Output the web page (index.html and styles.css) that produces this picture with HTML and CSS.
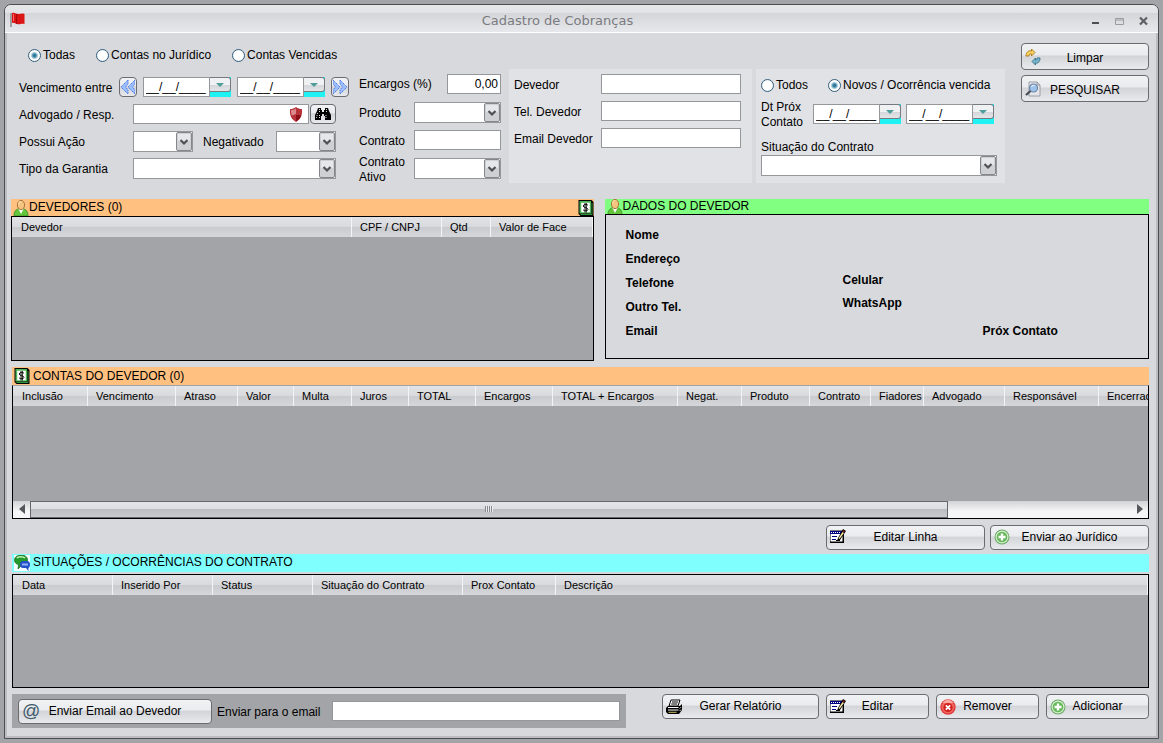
FILE: index.html
```
<!DOCTYPE html>
<html lang="pt-BR">
<head>
<meta charset="utf-8">
<title>Cadastro de Cobranças</title>
<link rel="stylesheet" href="styles.css">
</head>
<body>
<svg class="sprite" aria-hidden="true">
  <symbol id="i-edit" viewBox="0 0 16 16">
    <path d="M0 2h14v12H0z" fill="#000"/><path d="M0 2h13v11H0z" fill="#fff" stroke="#000" stroke-width="1"/>
    <path d="M0 2h12v3H0z" fill="#000080"/><path d="M1 3.500h10" stroke="#fff" stroke-width="1" stroke-dasharray="1 1"/>
    <path d="M2 7.500h5M2 10.500h4" stroke="#000080" stroke-width="1"/><path d="M6 11.500h4" stroke="#000"/>
    <path d="M13 0l3 2-6 9-3 1 1-3z" fill="#000"/><path d="M12.500 3l1.500 1-4.500 6-1-.7z" fill="#f6e7a0"/><path d="M13.200 1.200l1.600 1-.7 1-1.600-1z" fill="#b02020"/>
  </symbol>
  <symbol id="i-plus" viewBox="0 0 16 16">
    <circle cx="8" cy="8" r="7.500" fill="#6aa866"/><circle cx="8" cy="8" r="6.500" fill="#d8f0d0"/><circle cx="8" cy="8" r="5.300" fill="#67b85c"/>
    <path d="M8 4.500v7M4.500 8h7" stroke="#fff" stroke-width="2.400"/>
  </symbol>
  <symbol id="i-remove" viewBox="0 0 16 16">
    <circle cx="8" cy="8" r="7.700" fill="#e23a3a"/><circle cx="8" cy="8" r="6.300" fill="#f06a60"/><path d="M2.500 4a6.400 6.400 0 0 1 11 0z" fill="#f7aaa2"/>
    <circle cx="8" cy="8.500" r="4.600" fill="#d21f1f"/><path d="M5.800 6.300l4.400 4.400m0-4.400l-4.400 4.400" stroke="#fff" stroke-width="1.800"/>
  </symbol>
  <symbol id="i-print" viewBox="0 0 16 16">
    <path d="M5 1h9l-2 6H3z" fill="#fff" stroke="#000"/><path d="M6 3h6M5.300 5h6" stroke="#000"/>
    <path d="M2 7h12l2-2v6l-3 4H2l-2-2V9z" fill="#000"/><path d="M2 8.500h10.500M2 11h10.500" stroke="#fff"/><path d="M2.500 13.300h8" stroke="#c8c060"/><path d="M13.700 9.500l1.300-1.300M13.700 12l1.300-1.300" stroke="#ddd"/>
  </symbol>
  <symbol id="i-person" viewBox="0 0 16 16">
    <path d="M1 16c0-5 2-6.500 5-7.500h4c3 1 5 2.500 5 7.500z" fill="#63c53c" stroke="#3c8f2a" stroke-width=".8"/>
    <path d="M5.500 9h5L8 14z" fill="#fff"/><ellipse cx="8" cy="5" rx="3.600" ry="4.600" fill="#f5c47e" stroke="#a8743c" stroke-width="1"/>
    <path d="M5.600 4.500c0-2 1-3 2.400-3.200" stroke="#ffe9c0" fill="none"/>
  </symbol>
  <symbol id="i-money" viewBox="0 0 15 16">
    <path d="M0 0h13l2 2v14H2l-2-2z" fill="#000"/><path d="M1 1h11.500v12.500H1z" fill="#4cb455"/><path d="M2 14.500h11.500V3" stroke="#2f8f3a" fill="none"/>
    <path d="M2.700 2.700h8.600v9.600H2.700z" fill="#fff"/><path d="M9.500 5.300C9 4 4.700 4 4.700 6s4.800 1.400 4.800 3.300-3.800 1.900-4.900.6M6.500 3v9.500M7.800 3v9.500" stroke="#000" stroke-width=".9" fill="none"/>
  </symbol>
  <symbol id="i-chat" viewBox="0 0 16 16">
    <path d="M0 0h16v16H0z" fill="#f4fdff"/><path d="M7 0c4 0 6.500 2 6.500 5S11 10 8 10L4 14l.5-4.500C2 9 .5 7.500.5 5S3 0 7 0z" fill="#249a2c" stroke="#14651a" stroke-width=".7"/>
    <path d="M3 3c1-1.500 6-2 8 0" stroke="#c5f2b8" stroke-width="1.500" fill="none"/>
    <path d="M9 6h4c2 0 3 1.500 3 3.500S15 13 14.500 13v3L12 13H9c-2 0-3-1.500-3-3.500S7 6 9 6z" fill="#2450c8"/><path d="M8 9.500h6M9 8v3M11 8v3M13 8v3" stroke="#9dbcff" stroke-width=".9"/>
  </symbol>
  <symbol id="i-left" viewBox="0 0 14 16">
    <path d="M7 1v4L4.500 8 7 11v4L0 8zM14 1v4l-2.500 3 2.500 3v4L7 8z" fill="#9cc0ff" stroke="#3f6fe0" stroke-width=".9" stroke-dasharray="1.500 .8"/>
  </symbol>
  <symbol id="i-down" viewBox="0 0 8 4"><path d="M0 0h8L4 4z" fill="#4f9d9a"/></symbol>
</svg>

<div class="window">
  <header class="titlebar">
    <svg class="flag" viewBox="0 0 15 15"><path d="M1 1v14" stroke="#8a8a8a" stroke-width="1.500"/><path d="M2 1c3-1 4 1.500 7 1 2-.3 3-1 5.500 0v10c-3-1-4 .5-6.500.3C5.500 12 4.500 10 2 11z" fill="#dc1414"/><path d="M7 2c-.8 3-.8 6 0 10" stroke="#9c0808" fill="none"/><path d="M3.500 2v7" stroke="#f66" fill="none"/></svg>
    <h1>Cadastro de Cobranças</h1>
    <div class="controls">
      <button type="button" aria-label="Minimizar"><svg viewBox="0 0 10 10"><path d="M1 7h7" stroke="#4d4f55" stroke-width="2"/></svg></button>
      <button type="button" aria-label="Maximizar"><svg viewBox="0 0 10 10"><path d="M.5 2.500h8v6h-8zM1 4h8" stroke="#9a9ca2" fill="none"/></svg></button>
      <button type="button" aria-label="Fechar"><svg viewBox="0 0 10 10"><path d="M1 1.500l7 7m0-7l-7 7" stroke="#5d5f66" stroke-width="2.200"/></svg></button>
    </div>
  </header>

  <main>
    <form class="search">
      <div class="filters">
        <div class="radios">
          <label><input type="radio" name="tipo" checked>Todas</label>
          <label><input type="radio" name="tipo">Contas no Jurídico</label>
          <label><input type="radio" name="tipo">Contas Vencidas</label>
        </div>
        <div class="groups">
          <div class="group general">
            <div class="row spread">
              <label for="venc1">Vencimento entre</label>
              <button type="button" class="btn step" aria-label="Anterior"><svg><use href="#i-left"/></svg></button>
              <span class="date"><input id="venc1" type="text" value="__/__/____"><span class="drop"><button type="button" aria-label="Abrir calendário"><svg><use href="#i-down"/></svg></button></span></span>
              <span class="date"><input type="text" value="__/__/____" aria-label="Vencimento final"><span class="drop"><button type="button" aria-label="Abrir calendário"><svg><use href="#i-down"/></svg></button></span></span>
              <button type="button" class="btn step next" aria-label="Próximo"><svg><use href="#i-left"/></svg></button>
            </div>
            <div class="row">
              <label class="lead" for="adv">Advogado / Resp.</label>
              <span class="lookup"><input id="adv" type="text"><svg viewBox="0 0 14 15"><path d="M7 0c2 1.500 3.500 2 6 2 .5 6-1 10-6 13C2 12 .5 8 1 2c2.500 0 4-.5 6-2z" fill="#b8323a"/><path d="M7 1.500C5 2.700 4.500 3 2 3c0 3 .3 4 1 5.500L7 7z" fill="#d98a8c"/><path d="M7 8h5C11.500 11 10 13 7 14.500z" fill="#8c1018"/></svg></span>
              <button type="button" class="btn find" aria-label="Procurar"><svg viewBox="0 0 18 14"><path d="M4 1h3v2h1v2h2V3h1V1h3l1 3 2 4v5h-6V9h-1V7H8v2H7v4H1V8l2-4z" fill="#000"/><path d="M5.500 2v3M12.500 2v3M3.500 6l-1 5M12 8v4M5.500 8v4" stroke="#ddd" stroke-dasharray="1 1"/></svg></button>
            </div>
            <div class="row">
              <label class="lead" for="acao">Possui Ação</label>
              <select id="acao" class="w60"><option></option></select>
              <label class="mid" for="neg">Negativado</label>
              <select id="neg" class="w60"><option></option></select>
            </div>
            <div class="row">
              <label class="lead" for="gar">Tipo da Garantia</label>
              <select id="gar" class="grow"><option></option></select>
            </div>
          </div>

          <div class="group contract">
            <div class="row between"><label for="enc">Encargos (%)</label><input id="enc" class="num" type="text" value="0,00"></div>
            <div class="row between"><label for="prod">Produto</label><select id="prod" class="w87"><option></option></select></div>
            <div class="row between"><label for="cont">Contrato</label><input id="cont" class="w87" type="text"></div>
            <div class="row between"><label for="ativo">Contrato<br>Ativo</label><select id="ativo" class="w87"><option></option></select></div>
          </div>

          <div class="group panel debtor">
            <div class="row between"><label for="dev">Devedor</label><input id="dev" type="text"></div>
            <div class="row between"><label for="tel">Tel. Devedor</label><input id="tel" type="text"></div>
            <div class="row between"><label for="mail">Email Devedor</label><input id="mail" type="text"></div>
          </div>

          <div class="group panel status">
            <div class="radios">
              <label><input type="radio" name="oc">Todos</label>
              <label><input type="radio" name="oc" checked>Novos / Ocorrência vencida</label>
            </div>
            <div class="row dates">
              <label for="prox1">Dt Próx<br>Contato</label>
              <span class="date"><input id="prox1" type="text" value="__/__/____"><span class="drop"><button type="button" aria-label="Abrir calendário"><svg><use href="#i-down"/></svg></button></span></span>
              <span class="date"><input type="text" value="__/__/____" aria-label="Próximo contato final"><span class="drop"><button type="button" aria-label="Abrir calendário"><svg><use href="#i-down"/></svg></button></span></span>
            </div>
            <label class="above" for="sit">Situação do Contrato</label>
            <select id="sit" class="wide"><option></option></select>
          </div>
        </div>
      </div>
      <div class="actions">
        <button type="button" class="btn"><svg class="ic" viewBox="0 0 16 16"><path d="M1 7c0-4 2.500-6 5.500-5V0L10 3.500 6.500 7V5C5 4.600 4 5.500 4 7z" fill="#f8d060" stroke="#a9781c" stroke-width=".9"/><path d="M15 9c0 4-2 5.500-4.500 5v2L7 12.500 10.500 9v2c1 .3 1.500-.5 1.500-2z" fill="#79b4cc" stroke="#34708a" stroke-width=".9"/></svg><span>Limpar</span></button>
        <button type="button" class="btn"><svg class="ic" viewBox="0 0 16 16"><path d="M4 1h8l3 3v11H4z" fill="#e4e6ea" stroke="#8b8e96" stroke-width=".8"/><path d="M12 1v3h3" fill="none" stroke="#8b8e96" stroke-width=".8"/><circle cx="8.500" cy="7" r="4" fill="#9dc3ea" stroke="#6b87a8" stroke-width="1.200"/><path d="M6.500 6c.5-1.300 2-1.800 3-1.300" stroke="#fff" fill="none"/><path d="M5.500 10L1 14" stroke="#444952" stroke-width="2.200"/></svg><span>PESQUISAR</span></button>
      </div>
    </form>

    <div class="split">
      <section class="block">
        <h2 class="orange"><svg class="ic"><use href="#i-person"/></svg>DEVEDORES (0)<svg class="ic end"><use href="#i-money"/></svg></h2>
        <div class="grid debtors">
          <table>
            <colgroup><col class="c340"><col class="c90"><col class="c49"><col></colgroup>
            <thead><tr><th>Devedor</th><th>CPF / CNPJ</th><th>Qtd</th><th>Valor de Face</th></tr></thead>
          </table>
        </div>
      </section>
      <section class="block">
        <h2 class="green"><svg class="ic"><use href="#i-person"/></svg>DADOS DO DEVEDOR</h2>
        <div class="details">
          <div><b>Nome</b><b>Endereço</b><b>Telefone</b><b>Outro Tel.</b><b>Email</b></div>
          <div class="second"><b>Celular</b><b>WhatsApp</b></div>
          <div class="third"><b>Próx Contato</b></div>
        </div>
      </section>
    </div>

    <section class="block accounts">
      <h2 class="orange tall"><svg class="ic"><use href="#i-money"/></svg>CONTAS DO DEVEDOR (0)</h2>
      <div class="grid">
        <table>
          <colgroup><col class="c75"><col class="c88"><col class="c62"><col class="c56"><col class="c58"><col class="c57"><col class="c67"><col class="c77"><col class="c125"><col class="c64"><col class="c68"><col class="c61"><col class="c53"><col class="c81"><col class="c94"><col class="c80"></colgroup>
          <thead><tr><th>Inclusão</th><th>Vencimento</th><th>Atraso</th><th>Valor</th><th>Multa</th><th>Juros</th><th>TOTAL</th><th>Encargos</th><th>TOTAL + Encargos</th><th>Negat.</th><th>Produto</th><th>Contrato</th><th>Fiadores</th><th>Advogado</th><th>Responsável</th><th>Encerrado</th></tr></thead>
        </table>
        <div class="scroll">
          <button type="button" aria-label="Rolar para a esquerda"><svg viewBox="0 0 6 10"><path d="M6 0v10L0 5z" fill="#55575c"/></svg></button>
          <div class="track"><div class="thumb"><i></i></div></div>
          <button type="button" aria-label="Rolar para a direita"><svg viewBox="0 0 6 10"><path d="M0 0v10l6-5z" fill="#55575c"/></svg></button>
        </div>
      </div>
    </section>

    <div class="bar">
      <button type="button" class="btn w159"><svg class="ic"><use href="#i-edit"/></svg><span>Editar Linha</span></button>
      <button type="button" class="btn w159"><svg class="ic"><use href="#i-plus"/></svg><span>Enviar ao Jurídico</span></button>
    </div>

    <section class="block events">
      <h2 class="cyan tall"><svg class="ic"><use href="#i-chat"/></svg>SITUAÇÕES / OCORRÊNCIAS DO CONTRATO</h2>
      <div class="grid">
        <table>
          <colgroup><col class="c100"><col class="c100"><col class="c100"><col class="c150"><col class="c93"><col></colgroup>
          <thead><tr><th>Data</th><th>Inserido Por</th><th>Status</th><th>Situação do Contrato</th><th>Prox Contato</th><th>Descrição</th></tr></thead>
        </table>
      </div>
    </section>

    <footer>
      <div class="mailbar">
        <button type="button" class="btn w194"><span class="at" aria-hidden="true">@</span><span>Enviar Email ao Devedor</span></button>
        <label for="para">Enviar para o email</label>
        <input id="para" type="text">
      </div>
      <div class="bar">
        <button type="button" class="btn w157"><svg class="ic"><use href="#i-print"/></svg><span>Gerar Relatório</span></button>
        <button type="button" class="btn w103"><svg class="ic"><use href="#i-edit"/></svg><span>Editar</span></button>
        <button type="button" class="btn w103"><svg class="ic"><use href="#i-remove"/></svg><span>Remover</span></button>
        <button type="button" class="btn w103"><svg class="ic"><use href="#i-plus"/></svg><span>Adicionar</span></button>
      </div>
    </footer>
  </main>
</div>
</body>
</html>
```
FILE: styles.css
```
* { box-sizing: border-box; }

body {
  margin: 0;
  min-height: 100vh;
  display: flex;
  padding: 4px;
  background: #a3a4a8;
  color: #000;
  font: 12px/15px "Liberation Sans", Arial, sans-serif;
}

button, input, select { font: inherit; color: inherit; margin: 0; }
svg { display: block; }
.sprite { display: none; }

.window {
  flex: 1;
  min-width: 0;
  display: flex;
  flex-direction: column;
  border: 1px solid #4c4d52;
  border-radius: 7px 7px 0 0;
  background: #d8d9dc;
  box-shadow: inset -2px -2px 0 #bcbdc1, inset 2px 0 0 #bcbdc1;
  overflow: hidden;
}

.titlebar {
  display: grid;
  grid-template-columns: 1fr auto 1fr;
  align-items: center;
  height: 28px;
  padding: 4px 9px 0 5px;
  background: linear-gradient(#e6e7e9 0, #e2e3e6 28%, #d4d5d9 30%, #e6e7ea 96%);
  border-bottom: 1px solid #fff;
}
.titlebar h1 { margin: 0 44px 0 0; font: 13px/18px "DejaVu Sans", sans-serif; color: #7a7b80; }
.flag { width: 15px; height: 15px; margin-bottom: 3px; }
.controls { display: flex; gap: 14px; justify-content: flex-end; }
.controls button { padding: 0; border: 0; background: none; }
.controls svg { width: 10px; height: 10px; }

main { flex: 1; min-width: 0; display: flex; flex-direction: column; padding: 10px 9px 10px 6px; }

.search { display: flex; justify-content: space-between; min-height: 156px; }
.filters { padding-left: 8px; }
.filters > .radios { display: flex; gap: 21px; padding: 0 0 2px 9px; height: 26px; align-items: center; }
.radios label { display: flex; align-items: center; gap: 2px; white-space: nowrap; }
input[type="radio"] {
  appearance: none;
  width: 13px;
  height: 13px;
  border: 1px solid #33607f;
  border-radius: 50%;
  background: radial-gradient(#fff 50%, #dfe6ee);
}
input[type="radio"]:checked { background: radial-gradient(circle, #2f7898 0 1px, #5f9dba 2px, #fff 4px); }

.groups { display: flex; }
.group { display: flex; flex-direction: column; gap: 7px; height: 114px; }
.group label { white-space: nowrap; }
.row { display: flex; align-items: center; height: 20px; }
.between { justify-content: space-between; }
.general { width: 330px; padding-top: 8px; }
.contract { width: 142px; padding-top: 5px; margin-left: 10px; gap: 8px; }
.panel { background: #e1e2e5; }
.debtor { width: 243px; padding: 5px 11px 0 5px; margin-left: 8px; }
.general label, .debtor label, .contract .row + .row label { padding-top: 3px; }
.status { width: 249px; padding: 9px 8px 0 5px; margin-left: 4px; gap: 0; }
.lead { width: 114px; }
.mid { width: 83px; padding-left: 10px; }
.spread { justify-content: space-between; }

input[type="text"], select {
  min-width: 0;
  height: 20px;
  padding: 0 2px;
  border: 1px solid #96979b;
  border-radius: 0;
  background: #fff;
}
select {
  appearance: none;
  height: 21px;
  background: #fff url("data:image/svg+xml,%3Csvg xmlns='http://www.w3.org/2000/svg' width='16' height='19'%3E%3Crect x='.5' y='.5' width='15' height='18' rx='1.500' fill='%23cfd0d4' stroke='%2385868b'/%3E%3Cpath d='M2 2h12v7H2z' fill='%23e6e7ea'/%3E%3Cpath d='M4.500 8l3.500 3.500L11.500 8' fill='none' stroke='%23505157' stroke-width='2.200'/%3E%3C/svg%3E") no-repeat right center;
}
.w60 { width: 60px; }
.w87 { width: 87px; }
.grow { width: 203px; }
.wide { width: 236px; }
.num { width: 54px; text-align: right; }
.debtor input { width: 140px; }

.lookup { display: flex; width: 176px; position: relative; }
.lookup input { flex: 1; }
.lookup svg { position: absolute; right: 6px; top: 3px; width: 14px; height: 15px; }

.date { display: flex; width: 88px; }
.date input { width: 67px; }
.drop { width: 21px; height: 20px; background: #1ef2f2; }
.drop button {
  display: flex;
  align-items: center;
  justify-content: center;
  width: 21px;
  height: 15px;
  padding: 0;
  border: 1px solid #77797f;
  border-left: 0;
  border-radius: 0 3px 3px 0;
  background: linear-gradient(#f0f1f3 50%, #d4d5d9 52%, #e4e5e8);
}
.drop svg { width: 8px; height: 4px; }

.status .radios { display: flex; gap: 20px; height: 15px; }
.dates { gap: 5px; height: 30px; margin-top: 6px; }
.dates label { width: 47px; padding-top: 2px; }
.above { margin-top: 11px; line-height: 15px; }

.btn {
  display: grid;
  grid-template-columns: 16px 1fr;
  align-items: center;
  height: 26px;
  padding: 0 19px 0 3px;
  border: 1px solid #6b6c72;
  border-radius: 4px;
  background: linear-gradient(#f1f2f4 0, #eaebee 44%, #d3d4d8 48%, #e9eaed 100%);
  white-space: nowrap;
}
.btn span { text-align: center; }
.ic { width: 16px; height: 16px; }
.btn .at { font-size: 18px; line-height: 20px; color: #3d5a6c; }
.step { display: flex; justify-content: center; width: 18px; height: 20px; padding: 0; }
.step svg { width: 14px; height: 16px; }
.next svg { transform: scaleX(-1); }
.find { display: flex; justify-content: center; width: 26px; height: 20px; padding: 0; margin-left: 1px; }
.find svg { width: 18px; height: 14px; }
.actions { display: flex; flex-direction: column; gap: 5px; width: 128px; }
.actions .btn { height: 27px; }
.actions span { padding-top: 3px; }

.split { display: grid; grid-template-columns: 582fr 544fr; gap: 11px; }
.block { display: flex; flex-direction: column; min-width: 0; }
h2 { display: flex; align-items: center; margin: 0; padding-left: 2px; height: 17px; font: 12px/17px "Liberation Sans", Arial, sans-serif; }
h2.tall { height: 18px; padding-left: 2px; gap: 3px; }
h2 .end { margin-left: auto; }
.orange { background: #ffc080; }
.green { background: #80ff80; height: 15px; }
.cyan { background: #80ffff; }

.grid { display: flex; flex-direction: column; border: 1px solid #000; background: #a3a4a8; overflow: hidden; }
.debtors { height: 145px; }
.accounts, .events, footer { margin-left: 1px; }
.accounts { flex: 1 0 auto; margin-top: 6px; }
.accounts .grid { flex: 1; min-height: 133px; border-top-color: #a3a4a8; }
.events { flex: 1 0 auto; margin-top: 4px; }
.events .grid { flex: 1; min-height: 114px; margin-top: 2px; }

table { width: 100%; table-layout: fixed; border-collapse: separate; border-spacing: 0; }
th {
  height: 20px;
  padding: 0 0 0 8px;
  border-right: 1px solid #f4f4f6;
  background: linear-gradient(#e2e3e6 0, #d9dadd 48%, #cacbcf 52%, #d6d7da 100%);
  font: 11px/20px "Liberation Sans", Arial, sans-serif;
  text-align: left;
  white-space: nowrap;
}
th:first-child { padding-left: 9px; }
.accounts table { width: 1166px; }
.c340 { width: 340px; }
.c90 { width: 90px; }
.c49 { width: 49px; }
.c75 { width: 75px; }
.c88 { width: 88px; }
.c62 { width: 62px; }
.c56 { width: 56px; }
.c58 { width: 58px; }
.c57 { width: 57px; }
.c67 { width: 67px; }
.c77 { width: 77px; }
.c125 { width: 125px; }
.c64 { width: 64px; }
.c68 { width: 68px; }
.c61 { width: 61px; }
.c53 { width: 53px; }
.c81 { width: 81px; }
.c94 { width: 94px; }
.c80 { width: 80px; }
.c100 { width: 100px; }
.c150 { width: 150px; }
.c93 { width: 93px; }

.details { display: flex; height: 145px; border: 1px solid #000; padding: 12px 20px 0 20px; }
.details div { display: flex; flex-direction: column; gap: 8px; flex: 0 0 217px; }
.details b { line-height: 16px; }
.details .second { padding-top: 45px; gap: 7px; flex-basis: 140px; }
.details .third { padding-top: 96px; flex-basis: auto; }

.scroll { display: flex; height: 17px; margin-top: auto; background: linear-gradient(#d2d3d6, #f6f6f8 60%); }
.scroll button { display: flex; align-items: center; justify-content: center; width: 17px; padding: 0; border: 0; background: none; }
.scroll svg { width: 6px; height: 10px; }
.track { flex: 1; display: flex; }
.thumb {
  display: flex;
  align-items: center;
  justify-content: center;
  width: 83.4%;
  border: 1px solid #66676c;
  background: linear-gradient(#e4e5e8 0, #dcdde0 45%, #bdbec2 50%, #c9cace 100%);
}
.thumb i { width: 8px; height: 6px; background: repeating-linear-gradient(90deg, #85868b 0 1px, #eee 1px 2px); }

.bar { display: flex; justify-content: flex-end; gap: 5px; }
main > .bar { margin-top: 6px; }
.bar .btn, .mailbar .btn { height: 25px; }
.w159 { width: 159px; }
.w194 { width: 194px; }
.w157 { width: 157px; }
.w103 { width: 103px; }

footer { display: flex; justify-content: space-between; align-items: flex-start; margin-top: 6px; }
footer .bar { gap: 7px; }
.mailbar { display: flex; align-items: center; gap: 5px; flex: 0 0 54%; height: 34px; padding: 0 6px; background: #a3a4a8; }
.mailbar label { padding-top: 3px; }
.mailbar input { flex: 1; margin-left: 7px; }
```
